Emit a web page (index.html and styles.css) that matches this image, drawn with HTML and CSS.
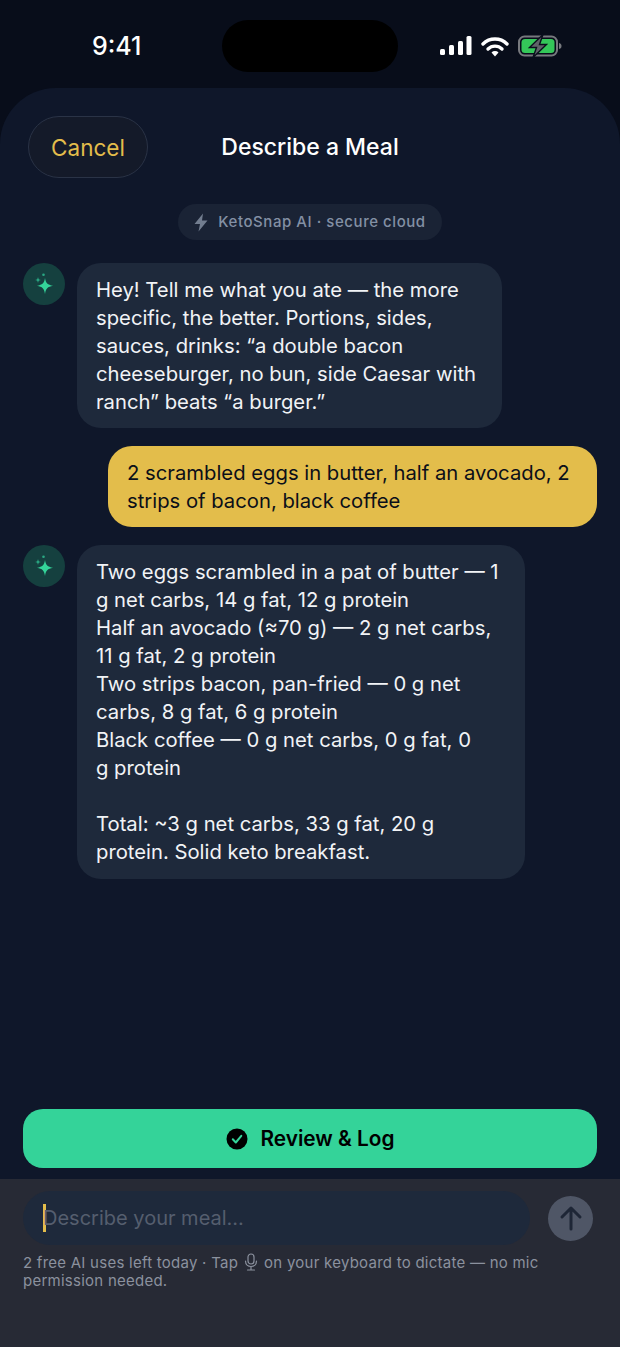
FILE: index.html
```html
<!DOCTYPE html>
<html lang="en">
<head>
    <meta charset="UTF-8">
    <meta name="viewport" content="width=device-width, initial-scale=1.0">
    <title>Describe a Meal</title>
    <link rel="stylesheet" href="styles.css">
</head>
<body>
    <div class="status-bar">
        <div class="time">9:41</div>
        <div class="island"></div>
        <div class="status-icons">
            <svg width="32" height="20" viewBox="0 0 32 20"><rect x="0" y="13" width="5" height="6" rx="1.5" fill="#fff"/><rect x="9" y="9" width="5" height="10" rx="1.5" fill="#fff"/><rect x="18" y="5" width="5" height="14" rx="1.5" fill="#fff"/><rect x="26.500" y="0" width="5" height="19" rx="1.5" fill="#fff"/></svg>
            <svg width="28" height="21" viewBox="0 0 28 21"><path d="M2 8 A17 17 0 0 1 26 8" fill="none" stroke="#fff" stroke-width="3.400" stroke-linecap="round"/><path d="M7 13 A10 10 0 0 1 21 13" fill="none" stroke="#fff" stroke-width="3.400" stroke-linecap="round"/><path d="M10.500 16.500 L14 20.500 L17.500 16.500 A5 5 0 0 0 10.500 16.500Z" fill="#fff"/></svg>
            <svg width="44" height="24" viewBox="0 0 44 24"><rect x="1" y="2.500" width="38" height="19" rx="5.500" fill="none" stroke="#77797e" stroke-width="2"/><rect x="3.500" y="5" width="33" height="14" rx="3.500" fill="#34c759"/><path d="M41 9 C43 9.500 43.500 10.500 43.500 12 C43.500 13.500 43 14.500 41 15Z" fill="#77797e"/><path d="M25 0.500 L11.500 13.500 H18.500 L15 23.500 L28.500 10.500 H21.500Z" fill="#5f6268" stroke="#0a0f1c" stroke-width="1.400"/></svg>
        </div>
    </div>

    <div class="sheet">
        <div class="sheet-header">
            <button class="cancel-button" type="button">Cancel</button>
            <div class="sheet-title">Describe a Meal</div>
        </div>

        <div class="chip-row">
            <div class="chip">
                <svg width="14" height="19" viewBox="0 0 14 19"><path d="M9 0.500 L0.500 11 H6 L4.500 18.500 L13.500 7.500 H8Z" fill="#727d8f"/></svg>
                <span>KetoSnap AI · secure cloud</span>
            </div>
        </div>

        <div class="messages">
            <div class="message">
                <div class="avatar">
                    <svg width="22" height="24" viewBox="0 0 22 24"><path d="M12 6 C12.800 11 14.500 12.800 20 13.800 C14.500 14.800 12.800 16.500 12 22 C11.200 16.500 9.500 14.800 4 13.800 C9.500 12.800 11.200 11 12 6Z" fill="#34d399"/><path d="M5 5 C5.300 7 6 7.800 8 8 C6 8.300 5.300 9 5 11 C4.700 9 4 8.300 2 8 C4 7.800 4.700 7 5 5Z" fill="#2aa884"/><circle cx="10.500" cy="2.800" r="1.300" fill="#2aa884"/></svg>
                </div>
                <div class="bubble bubble-intro">Hey! Tell me what you ate — the more specific, the better. Portions, sides, sauces, drinks: “a double bacon cheeseburger, no bun, side Caesar with ranch” beats “a burger.”</div>
            </div>

            <div class="message message-user">
                <div class="bubble bubble-user">2 scrambled eggs in butter, half an avocado, 2 strips of bacon, black coffee</div>
            </div>

            <div class="message">
                <div class="avatar">
                    <svg width="22" height="24" viewBox="0 0 22 24"><path d="M12 6 C12.800 11 14.500 12.800 20 13.800 C14.500 14.800 12.800 16.500 12 22 C11.200 16.500 9.500 14.800 4 13.800 C9.500 12.800 11.200 11 12 6Z" fill="#34d399"/><path d="M5 5 C5.300 7 6 7.800 8 8 C6 8.300 5.300 9 5 11 C4.700 9 4 8.300 2 8 C4 7.800 4.700 7 5 5Z" fill="#2aa884"/><circle cx="10.500" cy="2.800" r="1.300" fill="#2aa884"/></svg>
                </div>
                <div class="bubble bubble-summary">Two eggs scrambled in a pat of butter — 1 g net carbs, 14 g fat, 12 g protein<br>Half an avocado (≈70 g) — 2 g net carbs, 11 g fat, 2 g protein<br>Two strips bacon, pan-fried — 0 g net carbs, 8 g fat, 6 g protein<br>Black coffee — 0 g net carbs, 0 g fat, 0<br>g protein<br><br>Total: ~3 g net carbs, 33 g fat, 20 g protein. Solid keto breakfast.</div>
            </div>
        </div>

        <div class="review-row">
            <button class="review-button" type="button">
                <svg width="22" height="22" viewBox="0 0 22 22"><circle cx="11" cy="11" r="10.500" fill="#000"/><path d="M6.800 11.300 L9.800 14.500 L15.300 7.800" fill="none" stroke="#34d399" stroke-width="2" stroke-linecap="round" stroke-linejoin="round"/></svg>
                Review &amp; Log
            </button>
        </div>

        <div class="composer">
            <div class="composer-row">
                <div class="meal-input"><span class="caret"></span>Describe your meal...</div>
                <button class="send-button" type="button">
                    <svg width="24" height="26" viewBox="0 0 24 26"><path d="M12 24 V3 M3 12 L12 3 L21 12" fill="none" stroke="#1e2636" stroke-width="3" stroke-linecap="round" stroke-linejoin="round"/></svg>
                </button>
            </div>
            <div class="hint">
                <div class="hint-line"><span>2 free AI uses left today · Tap</span><svg class="mic" width="14" height="18" viewBox="0 0 14 18"><rect x="4" y="1" width="6" height="10" rx="3" fill="none" stroke="#8b919e" stroke-width="1.200"/><path d="M1.500 8 C1.500 11.500 4 13.500 7 13.500 C10 13.500 12.500 11.500 12.500 8 M7 13.500 V17 M3.500 17 H10.500" fill="none" stroke="#8b919e" stroke-width="1.200" stroke-linecap="round"/></svg><span>on your keyboard to dictate — no mic</span></div>
                <div>permission needed.</div>
            </div>
        </div>
    </div>
</body>
</html>
```

FILE: styles.css
```css
html, body {
    margin: 0;
    height: 100%;
}
body {
    width: 620px;
    height: 1347px;
    display: flex;
    flex-direction: column;
    overflow: hidden;
    background-color: #080d1a;
    font-family: Inter, "Liberation Sans", sans-serif;
    color: #ffffff;
}
button {
    font-family: inherit;
    border: none;
    padding: 0;
}

/* status bar */
.status-bar {
    height: 88px;
    flex: none;
    display: grid;
    grid-template-columns: 1fr 176px 1fr;
    align-items: start;
}
.time {
    margin-top: 31px;
    padding-left: 92px;
    font-size: 25px;
    line-height: 30px;
    font-weight: 500;
}
.island {
    margin-top: 20px;
    height: 52px;
    border-radius: 26px;
    background-color: #000000;
}
.status-icons {
    margin-top: 34px;
    padding-left: 42px;
    display: flex;
    align-items: center;
    gap: 9px;
}

/* sheet */
.sheet {
    flex: 1;
    display: flex;
    flex-direction: column;
    min-height: 0;
    background-color: #0f172a;
    border-radius: 56px 56px 0 0;
    overflow: hidden;
}
.sheet-header {
    height: 116px;
    flex: none;
    padding: 28px 0 0 28px;
    box-sizing: border-box;
    display: grid;
    grid-template-columns: 120px 1fr 120px;
    align-items: start;
}
.cancel-button {
    height: 62px;
    border: 1px solid #2a3346;
    border-radius: 31px;
    background-color: #141a29;
    color: #e3bd4b;
    font-size: 22.5px;
}
.sheet-title {
    padding-right: 28px;
    height: 62px;
    line-height: 62px;
    text-align: center;
    font-size: 23px;
    font-weight: 500;
}
.chip-row {
    display: flex;
    justify-content: center;
    flex: none;
}
.chip {
    height: 36px;
    width: 264px;
    box-sizing: border-box;
    border-radius: 18px;
    background-color: #1a2335;
    display: flex;
    align-items: center;
    justify-content: center;
    gap: 10px;
    color: #8390a4;
    font-size: 15px;
    font-weight: 500;
    letter-spacing: 0.55px;
    line-height: 34px;
}

/* messages */
.messages {
    flex: 1;
    display: flex;
    flex-direction: column;
    gap: 18px;
    padding: 23px 23px 0;
}
.message {
    display: flex;
    align-items: flex-start;
    gap: 12px;
}
.message-user {
    justify-content: flex-end;
}
.avatar {
    width: 42px;
    height: 42px;
    flex: none;
    border-radius: 50%;
    background-color: #15403f;
    display: flex;
    align-items: center;
    justify-content: center;
}
.bubble {
    box-sizing: border-box;
    padding: 13px 19px 12px;
    border-radius: 24px;
    background-color: #1e293b;
    color: #f1f3f6;
    font-size: 20.25px;
    line-height: 28px;
}
.bubble-intro {
    width: 425px;
}
.bubble-summary {
    width: 448px;
    padding-bottom: 13px;
}
.bubble-user {
    width: 489px;
    background-color: #e3bd4b;
    color: #0b0f19;
}

/* review button */
.review-row {
    flex: none;
    padding: 0 23px 11px;
}
.review-button {
    width: 100%;
    height: 59px;
    border-radius: 20px;
    background-color: #34d399;
    color: #000000;
    font-size: 20.8px;
    font-weight: 600;
    display: flex;
    align-items: center;
    justify-content: center;
    gap: 13px;
}

/* composer */
.composer {
    height: 168px;
    flex: none;
    box-sizing: border-box;
    padding: 12px 23px 0;
    background-color: #272a35;
}
.composer-row {
    display: flex;
    align-items: center;
    gap: 18px;
}
.meal-input {
    flex: 1;
    height: 54px;
    box-sizing: border-box;
    padding-left: 20px;
    border-radius: 27px;
    background-color: #1e293b;
    color: #555e6e;
    font-size: 20px;
    display: flex;
    align-items: center;
}
.caret {
    width: 3px;
    height: 28px;
    margin-right: -3px;
    background-color: #e3bd4b;
}
.send-button {
    width: 45px;
    height: 45px;
    margin-right: 4px;
    flex: none;
    border-radius: 50%;
    background-color: #4f5666;
    display: flex;
    align-items: center;
    justify-content: center;
}
.hint {
    margin-top: 8px;
    color: #8b919e;
    font-size: 15px;
    line-height: 18px;
    letter-spacing: 0.25px;
}
.mic {
    margin: 0 6px;
    vertical-align: -3px;
}
```
